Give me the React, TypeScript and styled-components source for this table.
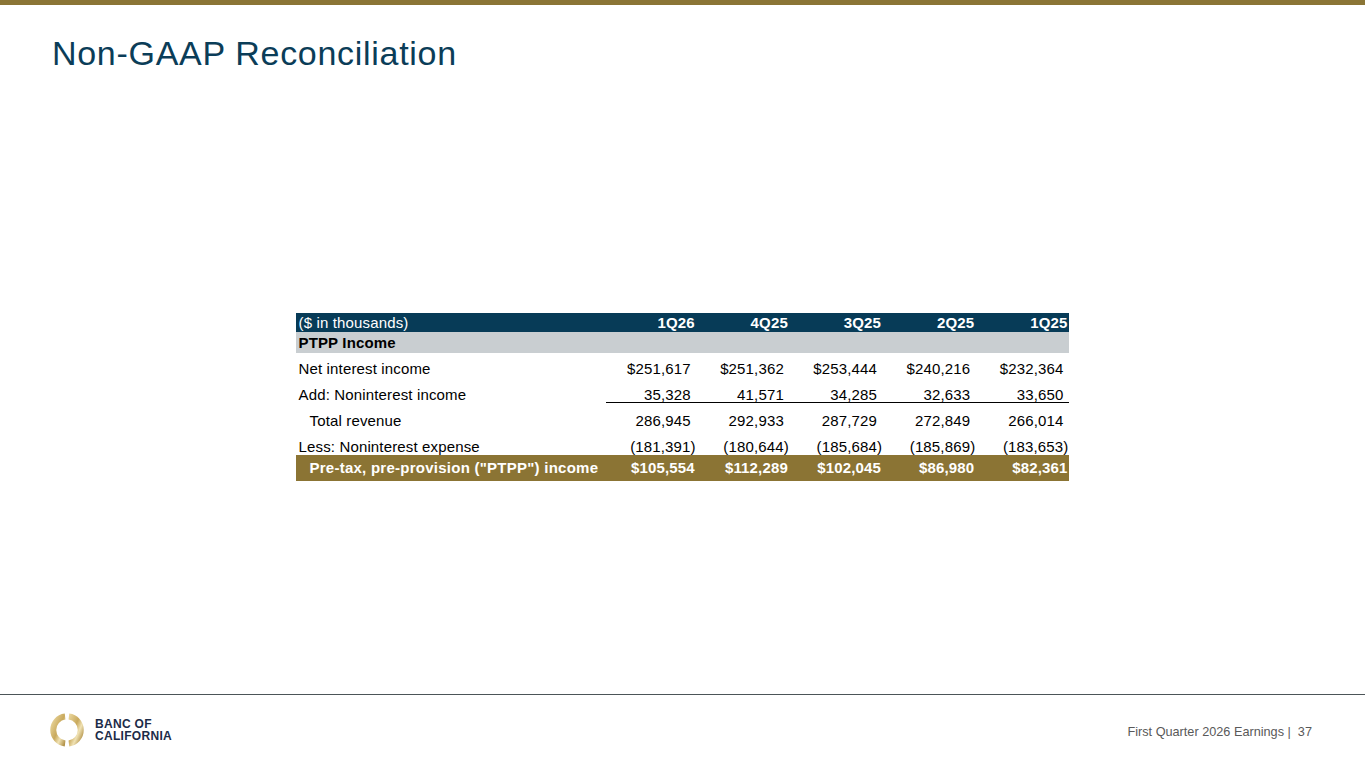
import React from "react";
import styled, { createGlobalStyle } from "styled-components";

const GlobalStyle = createGlobalStyle`
  html, body { margin: 0; padding: 0; background: #ffffff; }
  body { font-family: "Liberation Sans", Arial, sans-serif; }
  * { box-sizing: border-box; }
`;

const Slide = styled.div`
  width: 1365px;
  height: 768px;
  overflow: hidden;
  display: flex;
  flex-direction: column;
  background: #ffffff;
`;

const TopBar = styled.div`
  height: 5px;
  flex-shrink: 0;
  background: #8b7536;
`;

const Title = styled.h1`
  margin: 0;
  padding: 31px 0 0 52px;
  font-family: "Liberation Sans", Arial, sans-serif;
  font-weight: 400;
  font-size: 34px;
  line-height: 34px;
  letter-spacing: 0.7px;
  color: #0b3d58;
`;

const Main = styled.main`
  flex: 1;
  display: flex;
  justify-content: center;
  align-items: flex-start;
  padding-top: 243px;
`;

const Table = styled.div`
  width: 774px;
  display: grid;
  grid-template-columns: 308px repeat(5, 1fr);
  font-family: "Liberation Sans", Arial, sans-serif;
  font-size: 15px;
  letter-spacing: 0.15px;
  color: #000000;
`;

type RowKind = "head" | "section" | "data" | "first" | "total";

const Cell = styled.div<{
  $kind: RowKind;
  $label?: boolean;
  $indent?: boolean;
  $bold?: boolean;
  $paren?: boolean;
  $rule?: boolean;
  $ruleStart?: boolean;
}>`
  white-space: nowrap;
  text-align: ${(p) => (p.$label ? "left" : "right")};
  font-weight: ${(p) => (p.$bold ? 700 : 400)};
  padding-left: ${(p) => (p.$label ? (p.$indent ? "14px" : "3px") : "0")};
  padding-right: ${(p) =>
    p.$label ? "0" : p.$kind === "head" || p.$kind === "total" ? "2px" : p.$paren ? "1px" : "6px"};
  ${(p) =>
    p.$kind === "head"
      ? `background:#073b57;color:#ffffff;height:19px;line-height:19px;`
      : p.$kind === "section"
      ? `background:#c9ced1;color:#000000;height:21px;line-height:21px;`
      : p.$kind === "total"
      ? `background:#8b7434;color:#ffffff;height:26px;line-height:26px;`
      : p.$kind === "first"
      ? `height:24px;line-height:15px;padding-top:8px;`
      : `height:26px;line-height:15px;padding-top:10px;`}
  ${(p) => (p.$kind === "total" && p.$label ? `letter-spacing: 0.25px;` : "")}
  ${(p) => (p.$rule ? `box-shadow: inset 0 -1px 0 #000000;` : "")}
  ${(p) => (p.$ruleStart ? `margin-left: 2px;` : "")}
`;

const LogoRow = styled.footer`
  height: 74px;
  flex-shrink: 0;
  border-top: 1px solid #4c5558;
  display: flex;
  align-items: center;
  justify-content: space-between;
  padding: 0 53px 4px 50px;
`;

const Brand = styled.div`
  display: flex;
  align-items: center;
  gap: 11px;
`;

const BrandName = styled.div`
  font-family: "Liberation Sans", Arial, sans-serif;
  font-weight: 700;
  font-size: 12px;
  line-height: 12px;
  letter-spacing: 0.3px;
  color: #1c2b48;
  margin-top: 1px;
`;

const FooterText = styled.div`
  font-family: "Liberation Sans", Arial, sans-serif;
  font-size: 12.7px;
  color: #595959;
  margin-top: 4px;
`;

const quarters = ["1Q26", "4Q25", "3Q25", "2Q25", "1Q25"];

type Row = { label: string; values: string[]; kind: RowKind; indent?: boolean; rule?: boolean };

const rows: Row[] = [
  { label: "Net interest income", values: ["$251,617", "$251,362", "$253,444", "$240,216", "$232,364"], kind: "first" },
  { label: "Add: Noninterest income", values: ["35,328", "41,571", "34,285", "32,633", "33,650"], kind: "data", rule: true },
  { label: "Total revenue", values: ["286,945", "292,933", "287,729", "272,849", "266,014"], kind: "data", indent: true },
  { label: "Less: Noninterest expense", values: ["(181,391)", "(180,644)", "(185,684)", "(185,869)", "(183,653)"], kind: "data" },
];

const totalRow = {
  label: 'Pre-tax, pre-provision ("PTPP") income',
  values: ["$105,554", "$112,289", "$102,045", "$86,980", "$82,361"],
};

const Logo = () => (
  <svg width="34" height="34" viewBox="0 0 34 34" aria-hidden="true">
    <defs>
      <linearGradient id="gold" x1="0" y1="0" x2="1" y2="1">
        <stop offset="0" stopColor="#e8d49a" />
        <stop offset="0.45" stopColor="#c9a95c" />
        <stop offset="0.7" stopColor="#f0e2b4" />
        <stop offset="1" stopColor="#b08f44" />
      </linearGradient>
    </defs>
    <path d="M18.9 3.6 A13.5 13.5 0 0 1 18.9 30.4" fill="none" stroke="url(#gold)" strokeWidth="6" />
    <path d="M15.1 30.4 A13.5 13.5 0 0 1 15.1 3.6" fill="none" stroke="url(#gold)" strokeWidth="6" />
  </svg>
);

export default function App() {
  return (
    <>
      <GlobalStyle />
      <Slide>
        <TopBar />
        <Title>Non-GAAP Reconciliation</Title>
        <Main>
          <Table>
            <Cell $kind="head" $label>($ in thousands)</Cell>
            {quarters.map((q) => (
              <Cell key={q} $kind="head" $bold>{q}</Cell>
            ))}
            <Cell $kind="section" $label $bold>PTPP Income</Cell>
            {quarters.map((q) => (
              <Cell key={"s" + q} $kind="section" />
            ))}
            {rows.map((r) => (
              <React.Fragment key={r.label}>
                <Cell $kind={r.kind} $label $indent={r.indent}>{r.label}</Cell>
                {r.values.map((v, i) => (
                  <Cell
                    key={i}
                    $kind={r.kind}
                    $paren={v.startsWith("(")}
                    $rule={r.rule}
                    $ruleStart={r.rule && i === 0}
                  >
                    {v}
                  </Cell>
                ))}
              </React.Fragment>
            ))}
            <Cell $kind="total" $label $indent $bold>{totalRow.label}</Cell>
            {totalRow.values.map((v, i) => (
              <Cell key={"t" + i} $kind="total" $bold>{v}</Cell>
            ))}
          </Table>
        </Main>
        <LogoRow>
          <Brand>
            <Logo />
            <BrandName>
              BANC OF
              <br />
              CALIFORNIA
            </BrandName>
          </Brand>
          <FooterText>First Quarter 2026 Earnings |&nbsp; 37</FooterText>
        </LogoRow>
      </Slide>
    </>
  );
}
